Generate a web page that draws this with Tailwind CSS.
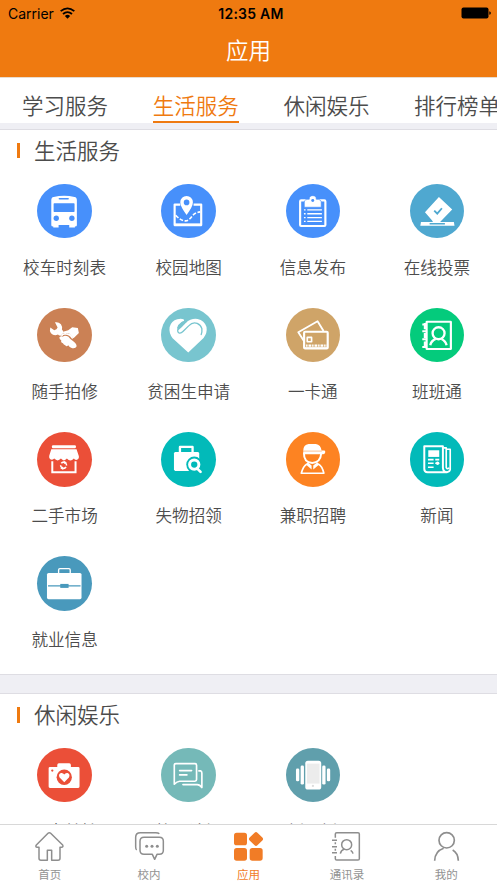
<!DOCTYPE html>
<html lang="zh-CN">
<head>
<meta charset="utf-8">
<meta name="viewport" content="width=device-width, initial-scale=1">
<title>应用</title>
<script src="https://cdn.jsdelivr.net/npm/@tailwindcss/browser@4"></script>
</head>
<body class="bg-white">
<div class="relative flex h-[883px] w-[497px] flex-col overflow-hidden bg-white font-['Noto_Sans_CJK_SC',sans-serif] font-[350] text-[#4c4c4c]">

  <header class="flex h-[77.5px] shrink-0 flex-col border-b border-[#e8dccf] bg-[#ef7a10]">
    <div class="grid h-[26px] grid-cols-3 items-center pr-[6px] pl-[8px] font-[Inter,sans-serif] text-[14px] text-black">
      <div class="flex items-center gap-[6px]">
        <span class="font-normal">Carrier</span>
        <svg class="h-[12px] w-[15px]" viewBox="0 0 45 35" fill="none" stroke="#000" stroke-width="5.5"><path d="M2 12Q22.500 -5 43 12"/><path d="M9 20.500Q22.500 9 36 20.500"/><path d="M14.500 26.500Q22.500 19.500 30.500 26.500L22.500 34.500Z" fill="#000" stroke="none"/></svg>
      </div>
      <span class="justify-self-center pl-[3px] text-[14px] font-semibold tracking-[0.25px] whitespace-nowrap">12:35 AM</span>
      <svg class="h-[12px] w-[30px] justify-self-end" viewBox="0 0 30 12"><rect x="0.500" y="0.500" width="27" height="11" rx="2"/><path d="M28.300 4.200Q29.900 4.600 29.900 6T28.300 7.800Z"/></svg>
    </div>
    <h1 class="pt-[6px] text-center text-[22.500px] leading-[34px] font-[350] text-white">应用</h1>
  </header>

  <nav class="flex h-[45.500px] shrink-0 gap-[44.700px] pt-[11px] pl-[22px] text-[21.500px] leading-[31px] whitespace-nowrap">
    <a class="w-[86px] shrink-0">学习服务</a>
    <a class="h-[34.500px] w-[86px] shrink-0 border-b-[2.500px] border-[#ef7a10] text-[#ef7a10]">生活服务</a>
    <a class="w-[86px] shrink-0">休闲娱乐</a>
    <a class="w-[86px] shrink-0">排行榜单</a>
  </nav>
  <div class="h-[6.500px] shrink-0 border-b border-[#dedde3] bg-[#efeff4]"></div>

  <section class="h-[544.500px] shrink-0 overflow-hidden">
    <div class="flex h-[54px] items-start pl-[17px]">
      <i class="mt-[13px] h-[15.500px] w-[3px] bg-[#ef7a10]"></i>
      <h2 class="pl-[14px] text-[21.500px] leading-[40px] font-[350]">生活服务</h2>
    </div>
    <div class="ml-[2.500px] grid w-[496.500px] auto-rows-[124.250px] grid-cols-4 text-[16.600px] leading-[24px]">
      <div class="flex flex-col items-center gap-[16.500px]">
        <svg class="size-[54.500px] rounded-full bg-[#4790fb]" viewBox="112 39 164 164">
          <path fill="#fff" d="M155 88Q155 79 162 78Q194 71 225 78Q232 79 232 88V163Q232 167 226 167V170H209V162H177V170H161V167Q155 167 155 163Z"/>
          <g fill="#4790fb"><rect x="177" y="81" width="31" height="5" rx="2.500"/><rect x="162" y="97" width="63" height="26" rx="2"/><circle cx="170" cy="142" r="8"/><circle cx="217" cy="142" r="8"/></g>
        </svg><span>校车时刻表</span>
      </div>
      <div class="flex flex-col items-center gap-[16.500px]">
        <svg class="size-[54.500px] rounded-full bg-[#4790fb]" viewBox="485 39 164 164">
          <path fill="none" stroke="#fff" stroke-width="6.500" stroke-linejoin="round" d="M543 101H526V162H606V101H583"/>
          <path stroke="#fff" stroke-width="8" d="M525 162H607"/>
          <path fill="none" stroke="#fff" stroke-width="5" stroke-dasharray="11 5" d="M529 133Q545 150 559 150Q570 149 579 135Q588 125 603 123"/>
          <path fill="#fff" fill-rule="evenodd" d="M562 132Q543 107 543 94A19 19 0 0 1 581 94Q581 107 562 132ZM562 86A8.500 8.500 0 1 0 562 103A8.500 8.500 0 1 0 562 86Z"/>
        </svg><span>校园地图</span>
      </div>
      <div class="flex flex-col items-center gap-[16.500px]">
        <svg class="size-[54.500px] rounded-full bg-[#4790fb]" viewBox="116 39 164 164">
          <rect x="158.500" y="88.500" width="76" height="77" rx="3" fill="none" stroke="#fff" stroke-width="6.500"/>
          <path fill="#fff" stroke="#4790fb" stroke-width="2" d="M171 109V93Q171 85 186 85Q185 74 196.500 74T207 85Q222 85 222 93V109Z"/>
          <circle cx="196.500" cy="89" r="4.500" fill="#4790fb"/>
          <path stroke="#fff" stroke-width="4" stroke-dasharray="5 5 44 0" d="M170 117H224M170 128.500H224M170 140H224M170 151.500H224"/>
        </svg><span>信息发布</span>
      </div>
      <div class="flex flex-col items-center gap-[16.500px]">
        <svg class="size-[54.500px] rounded-full bg-[#4fa8d0]" viewBox="488 39 164 164">
          <path fill="#fff" d="M521 153H620L622 165H519Z"/>
          <path fill="#fff" d="M575 78L615 116L580 152L576 156H559L554 148L533 124Z"/>
          <path fill="#4fa8d0" d="M547 156H593V161H547Z"/>
          <path fill="none" stroke="#4fa8d0" stroke-width="5.500" d="M561 119L570 128L584 112"/>
        </svg><span>在线投票</span>
      </div>

      <div class="flex flex-col items-center gap-[16.500px]">
        <svg class="size-[54.500px] rounded-full bg-[#cb8155]" viewBox="112 37 164 164">
          <path fill="#fff" d="M166 80Q177 78 184 86Q189 93 187 102L193 110L184 120Q178 121 175 117Q163 122 154 113Q149 106 152 96L164 104Q172 103 174 96Z"/>
          <path fill="#fff" d="M218 95L235 97L238 112L222 128L208 113L190 112L193 108L206 104Z"/>
          <path fill="none" stroke="#fff" stroke-width="5" stroke-linejoin="round" stroke-linecap="round" d="M187 121Q187 114 199 115Q211 115 218 127"/>
          <path fill="#fff" d="M189 124Q195 118 206 123Q212 132 222 138Q232 145 231 153Q228 160 218 158Q211 158 206 149Q201 155 197 149Q192 148 190 143Q183 141 185 134Q180 133 179 126L184 122Z"/>
        </svg><span>随手拍修</span>
      </div>
      <div class="flex flex-col items-center gap-[16.500px]">
        <svg class="size-[54.500px] rounded-full bg-[#78c5cf]" viewBox="485 37 164 164">
          <path fill="#fff" d="M567 171L520 128Q508 112 511 94Q516 76 534 71Q545 68 553 71Q557 76 551 79L559 82Q576 67 595 70Q616 75 622 94Q625 112 613 127Z"/>
          <path fill="#78c5cf" d="M555 75L563 78L548 94L537 104L534 96Q536 86 547 79Z"/>
          <path fill="none" stroke="#78c5cf" stroke-width="4" stroke-linecap="round" stroke-linejoin="round" d="M549 80L538 94Q532 108 539 112Q545 114 551 108L569 90Q580 78 594 83Q605 88 608 99Q609 109 606 117"/>
        </svg><span>贫困生申请</span>
      </div>
      <div class="flex flex-col items-center gap-[16.500px]">
        <svg class="size-[54.500px] rounded-full bg-[#cfa468]" viewBox="116 37 164 164">
          <g fill="none" stroke="#fff" stroke-width="5.500" stroke-linejoin="round"><path d="M170 136L153 110L211 77L229 106"/><rect x="170.500" y="108.500" width="71" height="50" rx="3" stroke-width="6.500"/><rect x="180" y="125.500" width="13" height="13" stroke-width="5"/></g>
          <path stroke="#fff" stroke-width="7" stroke-dasharray="3 1.500 3 1.500 7 2" d="M176 150H239"/><path stroke="#fff" stroke-width="4" d="M170 158H242"/>
        </svg><span>一卡通</span>
      </div>
      <div class="flex flex-col items-center gap-[16.500px]">
        <svg class="size-[54.500px] rounded-full bg-[#04cb7c]" viewBox="488 37 164 164">
          <g fill="none" stroke="#fff"><rect x="538" y="78.500" width="73" height="82" rx="1" stroke-width="6.500"/><path stroke-width="7" d="M533 82V101M533 112V127M533 138V157"/><circle cx="574" cy="113" r="18" stroke-width="7"/><path stroke-width="7" d="M549 149Q551 137 565 130M583 130Q596 137 598 149"/></g>
          <path stroke="#fff" stroke-width="6" d="M525 87H537M525 107H537M525 131H537M525 154H537"/>
        </svg><span>班班通</span>
      </div>

      <div class="flex flex-col items-center gap-[16.500px]">
        <svg class="size-[54.500px] rounded-full bg-[#eb4f38]" viewBox="112 35 164 164">
          <rect x="157" y="75" width="72" height="9" rx="3" fill="#fff"/>
          <path fill="#fff" d="M155 87H231L238 108Q239 118 230 119Q225 119 223 115Q212 127 202 115Q193 126 184 115Q174 126 164 115Q158 121 151 116Q147 112 149 106Z"/>
          <path fill="none" stroke="#fff" stroke-width="6" d="M158 123V156H228V123"/>
          <circle cx="192" cy="135" r="9" fill="none" stroke="#fff" stroke-width="4.500" stroke-dasharray="22 6.270" transform="rotate(35 192 135)"/>
          <path fill="#fff" d="M193 122L202 126L194 131ZM191 149L182 144L190 139Z"/>
        </svg><span>二手市场</span>
      </div>
      <div class="flex flex-col items-center gap-[16.500px]">
        <svg class="size-[54.500px] rounded-full bg-[#02bab9]" viewBox="485 35 164 164">
          <path fill="#fff" d="M528 95H596Q600 96 600 100V152H528Q524 151 524 147V100Q524 96 528 95Z"/>
          <path fill="none" stroke="#fff" stroke-width="7" stroke-linejoin="round" d="M542 98V80H580V98"/>
          <circle cx="585" cy="133" r="24" fill="#02bab9"/><path stroke="#02bab9" stroke-width="14" d="M592 142L609 160"/>
          <circle cx="585" cy="133" r="14" fill="none" stroke="#fff" stroke-width="9"/>
          <path stroke="#fff" stroke-width="8" stroke-linecap="round" d="M595 146L604 155"/>
        </svg><span>失物招领</span>
      </div>
      <div class="flex flex-col items-center gap-[16.500px]">
        <svg class="size-[54.500px] rounded-full bg-[#fd8322]" viewBox="116 35 164 164">
          <path fill="#fff" d="M168 91Q168 73 184 71H206Q221 73 223 91H232Q235 92 234 97Q233 102 228 102H168Z"/>
          <path stroke="#fd8322" stroke-width="1.500" d="M168 92.500H224"/>
          <path fill="none" stroke="#fff" stroke-width="6" d="M170 97Q169 127 195 128Q220 127 222 99"/>
          <path fill="none" stroke="#fff" stroke-width="5" stroke-linejoin="round" d="M179 131Q168 137 162 159H230Q225 137 213 131"/>
          <path fill="#fff" d="M176 133L181 126Q188 131 193 136V148ZM216 133L211 126Q203 131 198 136V148Z"/>
        </svg><span>兼职招聘</span>
      </div>
      <div class="flex flex-col items-center gap-[16.500px]">
        <svg class="size-[54.500px] rounded-full bg-[#02bab9]" viewBox="488 35 164 164">
          <g fill="none" stroke="#fff" stroke-width="6" stroke-linejoin="round"><path d="M531 78H587V142Q588 156 599 156H541Q531 155 531 146Z"/><path stroke-width="5" d="M588 83H597V142Q601 149 605 142M598 87H609V148Q607 156 597 156"/></g>
          <rect x="543" y="90" width="33" height="20" fill="#fff"/>
          <path stroke="#fff" stroke-width="5" d="M542 118H559M564 118H576M542 129H559M564 129H576M542 141H559"/><circle cx="571" cy="129" r="5" fill="#fff"/>
        </svg><span>新闻</span>
      </div>

      <div class="flex flex-col items-center gap-[16.500px]">
        <svg class="size-[54.500px] rounded-full bg-[#4999bc]" viewBox="112 48 164 164">
          <rect x="142" y="99" width="104" height="79" rx="5" fill="#fff"/><path fill="none" stroke="#fff" stroke-width="4" d="M177 99V90Q177 86 181 86H208Q212 86 212 90V99"/>
          <path stroke="#4999bc" stroke-width="3.500" d="M145 138H243"/><rect x="182" y="132" width="25" height="12" fill="#4999bc"/>
        </svg><span>就业信息</span>
      </div>
    </div>
  </section>

  <div class="h-[20px] shrink-0 border-y border-[#dedde3] bg-[#efeff4]"></div>

  <section class="h-[129.500px] shrink-0 overflow-hidden">
    <div class="flex h-[53.500px] items-start pl-[17px]">
      <i class="mt-[13px] h-[15.500px] w-[3px] bg-[#ef7a10]"></i>
      <h2 class="pl-[14px] text-[21.500px] leading-[39px] font-[350]">休闲娱乐</h2>
    </div>
    <div class="ml-[2.500px] grid w-[496.500px] grid-cols-4 text-[16.600px] leading-[24px]">
      <div class="flex flex-col items-center gap-[16.500px]">
        <svg class="size-[54.500px] rounded-full bg-[#eb4f38]" viewBox="112 37 164 164">
          <path fill="#fff" d="M151 94H173V88Q173 83 178 83H209Q214 83 214 88V94H236Q240 94 240 98V153Q240 157 236 157H151Q147 157 147 153V98Q147 94 151 94Z"/>
          <circle cx="194" cy="125" r="23" fill="#eb4f38"/><circle cx="158" cy="105" r="3.500" fill="#eb4f38"/>
          <path fill="#fff" d="M194 140L180 126Q175 115 184 112Q191 111 194 117Q197 111 204 112Q213 115 208 126Z"/>
        </svg><span>百变美拍</span>
      </div>
      <div class="flex flex-col items-center gap-[16.500px]">
        <svg class="size-[54.500px] rounded-full bg-[#75b9b8]" viewBox="485 37 164 164">
          <g fill="none" stroke="#fff" stroke-width="5" stroke-linejoin="round" stroke-linecap="round"><path d="M525 146V89Q525 84 530 84H587Q592 84 592 89V132Q592 137 587 137H541Q533 138 525 146Z"/><path d="M599 106H604Q608 107 608 112V156Q602 147 594 147H551"/><path d="M541 105H577M541 118H563"/></g>
        </svg><span>校园论坛</span>
      </div>
      <div class="flex flex-col items-center gap-[16.500px]">
        <svg class="size-[54.500px] rounded-full bg-[#609fac]" viewBox="116 37 164 164">
          <rect x="174" y="75" width="48" height="87" rx="8" fill="#fff"/><rect x="179" y="84" width="38" height="60" fill="#ececec"/><circle cx="197" cy="151" r="3.500" fill="#ddd"/>
          <g fill="#fff"><rect x="146" y="99" width="10" height="38" rx="4"/><rect x="160" y="90" width="10" height="57" rx="4"/><rect x="225" y="90" width="10" height="57" rx="4"/><rect x="239" y="99" width="10" height="38" rx="4"/></g>
        </svg><span>摇一摇</span>
      </div>
    </div>
  </section>

  <footer class="grid h-[60px] shrink-0 grid-cols-5 border-t border-[#d8d8d8] bg-white text-[11.500px] leading-[16px] font-normal text-[#929292]">
    <div class="flex flex-col items-center gap-[3.500px] pt-[6.500px]">
      <svg class="size-[31px]" viewBox="102 289 93 93" fill="none" stroke="#8e8e8e" stroke-width="4.500" stroke-linejoin="round"><path d="M148 294Q150 294 152 296L188 331Q191 337 184 338H180V371Q180 377 174 377H155V347H142V377H123Q117 377 117 371V338H112Q105 337 109 331L144 296Q146 294 148 294Z"/></svg>
      <span>首页</span>
    </div>
    <div class="flex flex-col items-center gap-[3.500px] pt-[6.500px]">
      <svg class="size-[31px]" viewBox="401 289 93 93" fill="none" stroke="#8e8e8e" stroke-width="4.500" stroke-linejoin="round"><path d="M409 346Q406 344 406 336V308Q406 294 420 294H466Q474 294 477 297"/><path d="M431 308H477Q489 308 489 320V347Q489 359 477 359H470L463 374L456 359H431Q419 359 419 347V320Q419 308 431 308Z"/><g fill="#8e8e8e" stroke="none"><circle cx="439" cy="335" r="4.500"/><circle cx="455" cy="335" r="4.500"/><circle cx="471" cy="335" r="4.500"/></g></svg>
      <span>校内</span>
    </div>
    <div class="flex flex-col items-center gap-[3.500px] pt-[6.500px] text-[#f17c26]">
      <svg class="size-[31px]" viewBox="0 0 93 93" fill="#f17c26"><rect x="3" y="5" width="39" height="38" rx="8"/><rect x="3" y="51" width="39" height="38" rx="8"/><rect x="50" y="51" width="39" height="38" rx="8"/><rect x="52.500" y="7.500" width="33" height="33" rx="6" transform="rotate(45 69 24)"/></svg>
      <span>应用</span>
    </div>
    <div class="flex flex-col items-center gap-[3.500px] pt-[6.500px] pr-[2px]">
      <svg class="size-[31px]" viewBox="255 289 93 93" fill="none" stroke="#8e8e8e" stroke-width="4.500"><path d="M268 309V298Q268 294 272 294H336Q340 294 340 298V372Q340 376 336 376H272Q268 376 268 372V364M268 323V329M268 342V348"/><path d="M258 317H273M258 336H273M258 354H273"/><circle cx="302" cy="330" r="15"/><path d="M283 357Q285 347 295 343M314 347Q320 351 321 357"/></svg>
      <span>通讯录</span>
    </div>
    <div class="flex flex-col items-center gap-[3.500px] pt-[6.500px] pr-[2px]">
      <svg class="size-[31px]" viewBox="551 289 93 93" fill="none" stroke="#8e8e8e" stroke-width="5"><circle cx="598" cy="317" r="23"/><path d="M562 378Q563 350 589 341M616 346Q632 355 633 378"/></svg>
      <span>我的</span>
    </div>
  </footer>
</div>
</body>
</html>
